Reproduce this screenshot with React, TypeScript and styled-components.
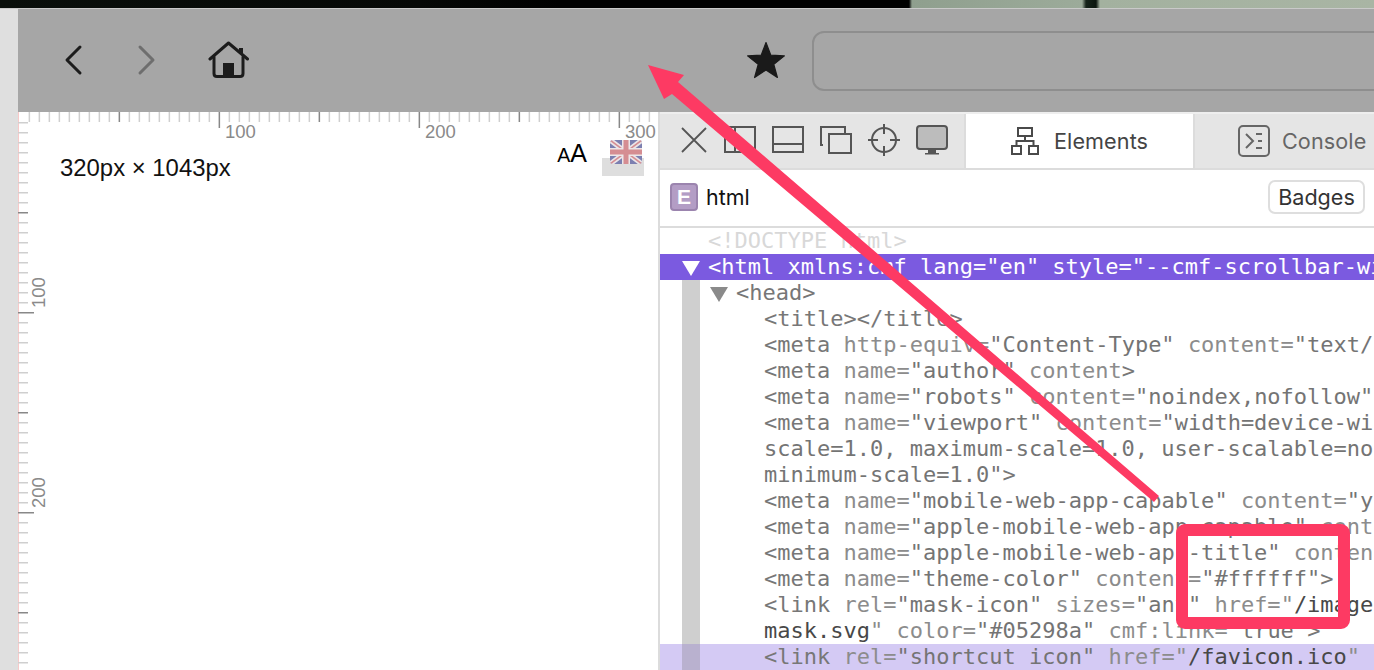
import React from "react";
import styled, { createGlobalStyle } from "styled-components";

const Global = createGlobalStyle`
  html, body { margin: 0; padding: 0; width: 1374px; height: 670px; overflow: hidden; background: #fff; }
  #root { width: 1374px; height: 670px; }
  * { box-sizing: border-box; }
`;

const Page = styled.div`
  position: relative;
  width: 1374px;
  height: 670px;
  overflow: hidden;
  display: flex;
  flex-direction: column;
  font-family: "Liberation Sans", Arial, sans-serif;
`;
const Wallpaper = styled.div`
  height: 8px;
  flex: none;
  background: linear-gradient(90deg, #0a0f0b 0, #060806 420px, #000 560px, #000 909px, #8f9f8e 912px, #9cab9a 1082px, #16231a 1086px, #0b150e 1096px, #a3b19f 1100px, #a9b5a4 1374px);
`;
const EdgeLine = styled.div`
  height: 1px;
  flex: none;
  background: #c9c9c9;
`;
const Main = styled.div`
  flex: 1;
  min-height: 0;
  display: flex;
`;
const SideGutter = styled.div`
  width: 18px;
  flex: none;
  background: #dfdfdf;
`;
const Content = styled.div`
  flex: 1;
  min-width: 0;
  display: flex;
  flex-direction: column;
`;
const Toolbar = styled.div`
  height: 103px;
  flex: none;
  background: #a6a6a6;
  display: flex;
  align-items: center;
  padding: 0 0 2px 44.5px;
`;
const NavIcon = styled.svg<{ $gap: number }>`
  flex: none;
  display: block;
  margin-right: ${(p) => p.$gap}px;
`;
const UrlBox = styled.div`
  flex: 1;
  align-self: flex-start;
  height: 60px;
  margin-right: -30px;
  margin-top: 22px;
  border: 2.5px solid #8e8e8e;
  border-radius: 12px;
`;
const Split = styled.div`
  flex: 1;
  min-height: 0;
  display: flex;
`;
const Viewport = styled.div`
  width: 640px;
  flex: none;
  display: flex;
  flex-direction: column;
  background: #fff;
`;
const RulerSvg = styled.svg<{ $overlap?: number }>`
  display: block;
  flex: none;
  margin-bottom: ${(p) => -(p.$overlap ?? 0)}px;
`;
const ViewportBody = styled.div`
  flex: 1;
  min-height: 0;
  display: flex;
`;
const Canvas = styled.div`
  flex: 1;
  min-width: 0;
`;
const SizeBar = styled.div`
  display: flex;
  align-items: flex-start;
  padding-left: 10px;
  height: 40px;
`;
const SizeText = styled.div`
  font-size: 23.9px;
  line-height: 28px;
  color: #111;
  margin-top: 15px;
  white-space: nowrap;
`;
const FontToggle = styled.div`
  margin-left: auto;
  margin-top: 1px;
  display: flex;
  align-items: baseline;
  line-height: 27px;
  color: #000;
  font-size: 25px;
`;
const SmallA = styled.span`
  font-size: 19.5px;
`;
const LangBox = styled.div`
  position: relative;
  width: 42px;
  height: 18px;
  margin: 19px 14px 0 15px;
  background: #dedede;
  flex: none;
`;
const Flag = styled.svg`
  position: absolute;
  left: 8px;
  top: -18px;
  display: block;
`;
const Devtools = styled.div`
  flex: 1;
  min-width: 0;
  display: flex;
  flex-direction: column;
  border-left: 2px solid #dcdcdc;
  background: #fff;
  overflow: hidden;
`;
const TabBar = styled.div`
  height: 58px;
  flex: none;
  display: flex;
  background: #e5e5e5;
  border-top: 2px solid #eeeeee;
  border-bottom: 2px solid #dcdcdc;
`;
const ToolIcons = styled.div`
  width: 306px;
  flex: none;
  display: flex;
  align-items: center;
  padding: 0 0 2px 20px;
  gap: 16px;
  border-right: 2px solid #dcdcdc;
`;
const ToolIcon = styled.svg`
  display: block;
  flex: none;
`;
const Tab = styled.div<{ $active?: boolean }>`
  width: 229px;
  flex: none;
  display: flex;
  align-items: center;
  gap: ${(p) => (p.$active ? 15 : 12)}px;
  padding-left: ${(p) => (p.$active ? 45 : 43)}px;
  background: ${(p) => (p.$active ? "#fff" : "transparent")};
  border-right: 2px solid #dcdcdc;
  color: ${(p) => (p.$active ? "#444" : "#666")};
  font-family: Inter, "Liberation Sans", sans-serif;
  font-size: 21.6px;
  letter-spacing: 0.1px;
`;
const TabGlyph = styled.svg`
  display: block;
  flex: none;
`;
const PathBar = styled.div`
  height: 58px;
  flex: none;
  display: flex;
  align-items: center;
  padding: 0 9px 2px 10px;
  border-bottom: 2px solid #dcdcdc;
`;
const NodeBadge = styled.span`
  width: 28px;
  height: 28px;
  flex: none;
  display: flex;
  align-items: center;
  justify-content: center;
  border-radius: 4px;
  background: #b39dc5;
  border: 2px solid #9b84ae;
  color: #fff;
  font-family: "Liberation Sans", sans-serif;
  font-weight: 700;
  font-size: 21px;
`;
const PathName = styled.span`
  margin-left: 8px;
  color: #111;
  font-family: Inter, "Liberation Sans", sans-serif;
  font-size: 21.4px;
`;
const BadgesButton = styled.div`
  margin-left: auto;
  width: 97px;
  height: 34px;
  display: flex;
  align-items: center;
  justify-content: center;
  border: 2px solid #dedede;
  border-radius: 7px;
  color: #333;
  font-family: Inter, "Liberation Sans", sans-serif;
  font-size: 21.6px;
`;
const Code = styled.div`
  flex: 1;
  min-height: 0;
  overflow: hidden;
  font-family: "DejaVu Sans Mono", monospace;
  font-size: 22px;
`;
const Row = styled.div<{ $indent: number; $kind?: "selected" | "hover"; $guide?: boolean }>`
  height: 26px;
  line-height: 26px;
  white-space: pre;
  padding-left: ${(p) => p.$indent}px;
  color: ${(p) => (p.$kind === "selected" ? "#fff" : "#777")};
  background-color: ${(p) =>
    p.$kind === "selected" ? "#7b5ae0" : p.$kind === "hover" ? "#d4caf4" : "transparent"};
  background-image: ${(p) =>
    p.$guide
      ? `linear-gradient(${p.$kind === "hover" ? "#b9b1cf, #b9b1cf" : "#cfcfcf, #cfcfcf"})`
      : "none"};
  background-size: 18px 100%;
  background-position: 22px 0;
  background-repeat: no-repeat;
`;
const Caret = styled.span<{ $light?: boolean }>`
  display: inline-block;
  vertical-align: middle;
  width: 0;
  height: 0;
  margin-right: 8px;
  border-left: 9px solid transparent;
  border-right: 9px solid transparent;
  border-top: 15px solid ${(p) => (p.$light ? "#fff" : "#8a8a8a")};
`;
const Attr = styled.span`
  color: #8c8c8c;
`;
const Val = styled.span`
  color: #747474;
`;
const Url = styled.span`
  color: #484848;
`;
const Faint = styled.span`
  color: #d8d8d8;
`;
const ArrowOverlay = styled.svg`
  position: absolute;
  left: 0;
  top: 0;
  pointer-events: none;
`;
const Highlight = styled.div`
  position: absolute;
  left: 1176px;
  top: 524px;
  width: 174px;
  height: 105px;
  border: 12px solid #fd3a63;
  border-radius: 9px;
  pointer-events: none;
`;

const range = (n: number) => Array.from({ length: n }, (_, i) => i);

const TopRuler = () => (
  <RulerSvg width={640} height={33} $overlap={6}>
    <rect x={0} y={0} width={1} height={27} fill="#f8c9c9" />
    {range(64).map((i) => {
      const x = 1 + i * 10;
      if (i === 0) return null;
      const major = i % 20 === 0;
      const mid = i % 10 === 0;
      return (
        <rect
          key={i}
          x={x - 0.4}
          y={0}
          width={1.5}
          height={major ? 16 : 10}
          fill={major || mid ? "#888" : "#cfcfcf"}
        />
      );
    })}
    {[100, 200, 300].map((n) => (
      <text key={n} x={n * 2 + 7} y={26} fontSize={18.5} fill="#8a8a8a" fontFamily="'Liberation Sans', sans-serif">
        {n}
      </text>
    ))}
    {[10, 20].map((y) => (
      <rect key={y} x={0} y={y} width={10} height={1.5} fill="#cfcfcf" />
    ))}
  </RulerSvg>
);

const LeftRuler = () => (
  <RulerSvg width={32} height={531}>
    <rect x={0} y={0} width={1} height={531} fill="#f8c9c9" />
    {range(54).map((i) => {
      const y = i * 10 + 3;
      const major = (i + 3) % 20 === 0;
      const mid = (i + 3) % 10 === 0;
      return (
        <rect
          key={i}
          x={0}
          y={y}
          width={major ? 16 : 10}
          height={1.5}
          fill={major || mid ? "#888" : "#cfcfcf"}
        />
      );
    })}
    {[100, 200].map((n) => (
      <text
        key={n}
        transform={`translate(26.5 ${n * 2 - 31}) rotate(-90)`}
        fontSize={18.5}
        fill="#8a8a8a"
        fontFamily="'Liberation Sans', sans-serif"
      >
        {n}
      </text>
    ))}
  </RulerSvg>
);

const Meta = ({ name, rest }: { name: string; rest: React.ReactNode }) => (
  <Row $indent={104} $guide>
    {"<meta "}
    <Attr>name=</Attr>
    <Val>"{name}"</Val>
    {rest}
  </Row>
);

export default function App() {
  return (
    <Page>
      <Global />
      <Wallpaper />
      <EdgeLine />
      <Main>
        <SideGutter />
        <Content>
          <Toolbar>
            <NavIcon $gap={50.5} width={22} height={32} viewBox="0 0 22 32" fill="none" stroke="#1c1c1c" strokeWidth={3} strokeLinecap="round" strokeLinejoin="round">
              <path d="M17 3 L4 16 L17 29" />
            </NavIcon>
            <NavIcon $gap={50.5} width={22} height={32} viewBox="0 0 22 32" fill="none" stroke="#6e6e6e" strokeWidth={3} strokeLinecap="round" strokeLinejoin="round">
              <path d="M5 3 L18 16 L5 29" />
            </NavIcon>
            <NavIcon $gap={496.5} width={42} height={38} viewBox="0 0 42 38" fill="none" stroke="#1c1c1c" strokeWidth={3} strokeLinecap="round" strokeLinejoin="round">
              <path d="M2 18 L20.5 2 L39.5 18" />
              <path d="M33 7 V12" strokeWidth={4} strokeLinecap="butt" />
              <path d="M6 16 V32.5 Q6 35.5 9 35.5 H32 Q35 35.5 35 32.5 V16" />
              <rect x={15} y={22} width={11} height={13} fill="#1c1c1c" stroke="none" />
            </NavIcon>
            <NavIcon $gap={26} width={40} height={38} viewBox="0 0 40 38">
              <path
                d="M20 1.5 L24.8 14.2 L38.4 14.9 L27.8 23.4 L31.4 36.5 L20 29 L8.6 36.5 L12.2 23.4 L1.6 14.9 L15.2 14.2 Z"
                fill="#1a1a1a"
                stroke="#1a1a1a"
                strokeWidth={1.2}
                strokeLinejoin="round"
              />
            </NavIcon>
            <UrlBox />
          </Toolbar>
          <Split>
            <Viewport>
              <TopRuler />
              <ViewportBody>
                <LeftRuler />
                <Canvas>
                  <SizeBar>
                    <SizeText>320px × 1043px</SizeText>
                    <FontToggle>
                      <SmallA>A</SmallA>A
                    </FontToggle>
                    <LangBox>
                      <Flag width={32} height={24} viewBox="0 0 32 24">
                        <defs>
                          <clipPath id="flagclip">
                            <rect width={32} height={24} rx={3} />
                          </clipPath>
                        </defs>
                        <g clipPath="url(#flagclip)">
                          <rect width={32} height={24} fill="#7c7fb0" />
                          <path d="M0 0 L32 24 M32 0 L0 24" stroke="#ebe5e8" strokeWidth={5} />
                          <path d="M0 0 L32 24 M32 0 L0 24" stroke="#d58d92" strokeWidth={1.6} />
                          <path d="M16 0 V24 M0 12 H32" stroke="#ece6e8" strokeWidth={8} />
                          <path d="M16 0 V24 M0 12 H32" stroke="#d58d92" strokeWidth={5} />
                        </g>
                      </Flag>
                    </LangBox>
                  </SizeBar>
                </Canvas>
              </ViewportBody>
            </Viewport>
            <Devtools>
              <TabBar>
                <ToolIcons>
                  <ToolIcon width={28} height={28} viewBox="0 0 28 28" stroke="#555" strokeWidth={1.8} fill="none">
                    <path d="M2 2 L26 26 M26 2 L2 26" />
                  </ToolIcon>
                  <ToolIcon width={32} height={28} viewBox="0 0 32 28" stroke="#555" strokeWidth={2} fill="none">
                    <rect x={1} y={1} width={30} height={25} />
                    <path d="M11 1 V26" />
                  </ToolIcon>
                  <ToolIcon width={32} height={28} viewBox="0 0 32 28" stroke="#555" strokeWidth={2} fill="none">
                    <rect x={1} y={1} width={30} height={25} />
                    <path d="M1 18 H31" />
                  </ToolIcon>
                  <ToolIcon width={32} height={28} viewBox="0 0 32 28" stroke="#555" strokeWidth={2} fill="none">
                    <path d="M3 19 H1 V1 H25 V8" />
                    <rect x={9} y={8} width={22} height={19} />
                  </ToolIcon>
                  <ToolIcon width={32} height={32} viewBox="0 0 32 32" stroke="#555" strokeWidth={2} fill="none">
                    <circle cx={16} cy={16} r={12} />
                    <path d="M16 0 V10 M16 22 V32 M0 16 H10 M22 16 H32" />
                  </ToolIcon>
                  <ToolIcon width={32} height={30} viewBox="0 0 32 30">
                    <rect x={1} y={1} width={30} height={23} rx={3} fill="#bcbcbc" stroke="#555" strokeWidth={2} />
                    <path d="M12 25 H20 V28 H23 V29.5 H9 V28 H12 Z" fill="#555" />
                  </ToolIcon>
                </ToolIcons>
                <Tab $active>
                  <TabGlyph width={28} height={28} viewBox="0 0 28 28" fill="none" stroke="#4a4a4a" strokeWidth={2}>
                    <rect x={7} y={1} width={14} height={8} />
                    <rect x={1} y={19} width={9} height={8} />
                    <rect x={18} y={19} width={9} height={8} />
                    <path d="M14 9 V14 M5.5 19 V14 H22.5 V19" />
                  </TabGlyph>
                  Elements
                </Tab>
                <Tab>
                  <TabGlyph width={32} height={32} viewBox="0 0 32 32" fill="none" stroke="#666" strokeWidth={2}>
                    <rect x={1} y={1} width={30} height={30} rx={4} />
                    <path d="M8 9 L15 16 L8 23" />
                    <path d="M18 9 H24 M20 16 H24 M18 23 H24" />
                  </TabGlyph>
                  Console
                </Tab>
              </TabBar>
              <PathBar>
                <NodeBadge>E</NodeBadge>
                <PathName>html</PathName>
                <BadgesButton>Badges</BadgesButton>
              </PathBar>
              <Code>
                <Row $indent={48}>
                  <Faint>{"<!DOCTYPE html>"}</Faint>
                </Row>
                <Row $indent={22} $kind="selected">
                  <Caret $light />
                  {'<html xmlns:cmf lang="en" style="--cmf-scrollbar-wi'}
                </Row>
                <Row $indent={50} $guide>
                  <Caret />
                  {"<head>"}
                </Row>
                <Row $indent={104} $guide>
                  {"<title></title>"}
                </Row>
                <Row $indent={104} $guide>
                  {"<meta "}
                  <Attr>http-equiv=</Attr>
                  <Val>"Content-Type"</Val> <Attr>content=</Attr>
                  <Val>"text/</Val>
                </Row>
                <Meta name="author" rest={<> <Attr>content</Attr>{">"}</>} />
                <Meta name="robots" rest={<> <Attr>content=</Attr><Val>"noindex,nofollow"</Val></>} />
                <Meta name="viewport" rest={<> <Attr>content=</Attr><Val>"width=device-wi</Val></>} />
                <Row $indent={104} $guide>
                  <Val>scale=1.0, maximum-scale=1.0, user-scalable=no</Val>
                </Row>
                <Row $indent={104} $guide>
                  <Val>minimum-scale=1.0"</Val>
                  {">"}
                </Row>
                <Meta name="mobile-web-app-capable" rest={<> <Attr>content=</Attr><Val>"y</Val></>} />
                <Meta name="apple-mobile-web-app-capable" rest={<> <Attr>cont</Attr></>} />
                <Meta name="apple-mobile-web-app-title" rest={<> <Attr>conten</Attr></>} />
                <Meta name="theme-color" rest={<> <Attr>content=</Attr><Val>"#ffffff"</Val>{">"}</>} />
                <Row $indent={104} $guide>
                  {"<link "}
                  <Attr>rel=</Attr>
                  <Val>"mask-icon"</Val> <Attr>sizes=</Attr>
                  <Val>"any"</Val> <Attr>href=</Attr>
                  <Attr>"</Attr>
                  <Url>/image</Url>
                </Row>
                <Row $indent={104} $guide>
                  <Url>mask.svg</Url>
                  <Attr>"</Attr> <Attr>color=</Attr>
                  <Val>"#05298a"</Val> <Attr>cmf:link=</Attr>
                  <Val>"true"</Val>
                  {">"}
                </Row>
                <Row $indent={104} $guide $kind="hover">
                  {"<link "}
                  <Attr>rel=</Attr>
                  <Val>"shortcut icon"</Val> <Attr>href=</Attr>
                  <Attr>"</Attr>
                  <Url>/favicon.ico</Url>
                  <Attr>"</Attr>
                </Row>
              </Code>
            </Devtools>
          </Split>
        </Content>
      </Main>
      <ArrowOverlay width={1374} height={670} viewBox="0 0 1374 670">
        <path
          d="M648 65 L684 75 L678 82 L1159 496 L1154 502 L672 94 L664 99 Z"
          fill="#fd3a63"
        />
      </ArrowOverlay>
      <Highlight />
    </Page>
  );
}
